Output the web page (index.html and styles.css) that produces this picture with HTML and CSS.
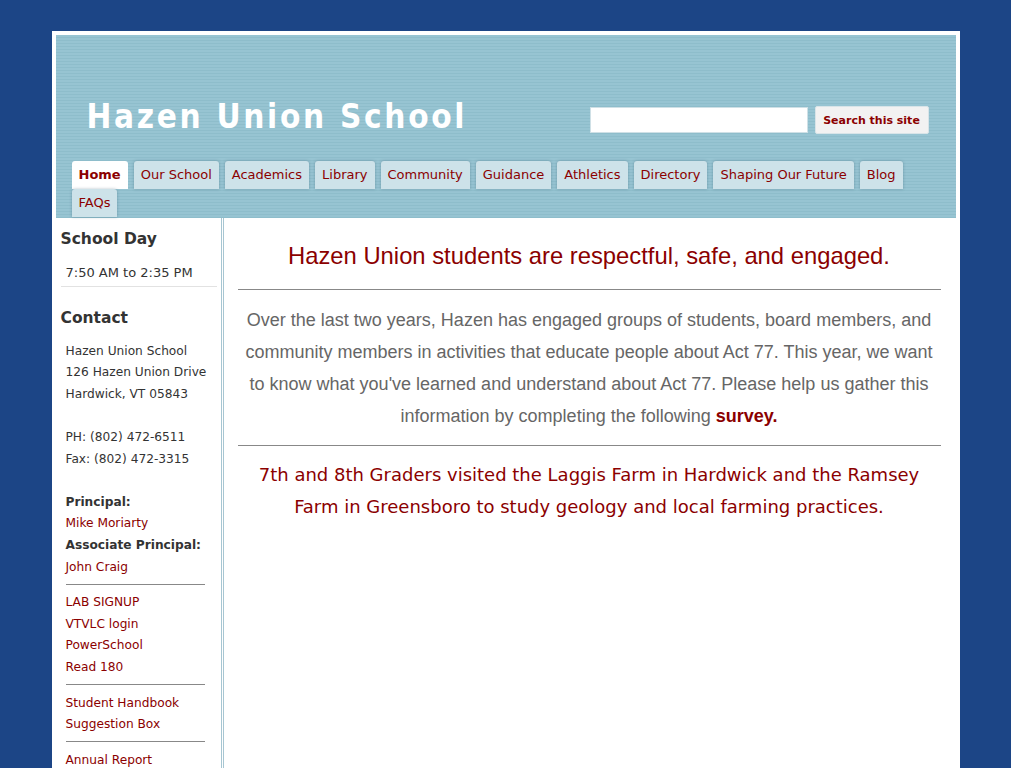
FILE: index.html
```html
<!DOCTYPE html>
<html lang="en">
<head>
<meta charset="utf-8">
<title>Hazen Union School</title>
<link rel="stylesheet" href="styles.css">
</head>
<body>
<div class="page">
  <div class="wrap">
    <header class="header">
      <div class="top">
        <h1 class="site-title">Hazen Union School</h1>
        <form class="search">
          <input class="search-input" type="text" aria-label="Search">
          <button class="search-btn" type="button">Search this site</button>
        </form>
      </div>
      <nav class="nav">
        <a class="tab active" href="#">Home</a>
        <a class="tab" href="#">Our School</a>
        <a class="tab" href="#">Academics</a>
        <a class="tab" href="#">Library</a>
        <a class="tab" href="#">Community</a>
        <a class="tab" href="#">Guidance</a>
        <a class="tab" href="#">Athletics</a>
        <a class="tab" href="#">Directory</a>
        <a class="tab" href="#">Shaping Our Future</a>
        <a class="tab" href="#">Blog</a>
        <a class="tab" href="#">FAQs</a>
      </nav>
    </header>
    <div class="main">
      <aside class="side">
        <h2 class="side-h">School Day</h2>
        <div class="side-box hours">7:50 AM to 2:35 PM</div>
        <h2 class="side-h contact-h">Contact</h2>
        <div class="side-box">
          <div>Hazen Union School</div>
          <div>126 Hazen Union Drive</div>
          <div>Hardwick, VT 05843</div>
          <div class="blank"></div>
          <div>PH: (802) 472-6511</div>
          <div>Fax: (802) 472-3315</div>
          <div class="blank"></div>
          <div class="b">Principal:</div>
          <div><a href="#">Mike Moriarty</a></div>
          <div class="b">Associate Principal:</div>
          <div><a href="#">John Craig</a></div>
          <hr class="side-hr">
          <div><a href="#">LAB SIGNUP</a></div>
          <div><a href="#">VTVLC login</a></div>
          <div><a href="#">PowerSchool</a></div>
          <div><a href="#">Read 180</a></div>
          <hr class="side-hr">
          <div><a href="#">Student Handbook</a></div>
          <div><a href="#">Suggestion Box</a></div>
          <hr class="side-hr">
          <div><a href="#">Annual Report</a></div>
        </div>
      </aside>
      <section class="content">
        <h2 class="headline">Hazen Union students are respectful, safe, and engaged.</h2>
        <hr class="c-hr">
        <p class="intro">Over the last two years, Hazen has engaged groups of students, board members, and community members in activities that educate people about Act 77. This year, we want to know what you've learned and understand about Act 77. Please help us gather this information by completing the following <a class="survey" href="#">survey.</a></p>
        <hr class="c-hr">
        <p class="news">7th and 8th Graders visited the Laggis Farm in Hardwick and the Ramsey Farm in Greensboro to study geology and local farming practices.</p>
      </section>
    </div>
  </div>
</div>
</body>
</html>
```

FILE: styles.css
```css
html { background: #fff; }
body { margin: 0; font-family: "DejaVu Sans", sans-serif; }
.page {
  margin-right: 13px;
  min-height: 768px;
  background: #1c4586;
  padding-top: 31px;
}
.wrap {
  width: 900px;
  margin: 0 auto;
  border: 4px solid #fff;
  border-bottom: 0;
  background: #fff;
}
.header {
  height: 183px;
  background: repeating-linear-gradient(to bottom, #97c4d2 0, #97c4d2 2px, #8ebdcb 2px, #8ebdcb 3px);
  display: flex;
  flex-direction: column;
  justify-content: space-between;
}
.top {
  display: flex;
  align-items: flex-start;
  justify-content: space-between;
  padding: 62px 27px 0 31px;
}
.site-title {
  margin: 0;
  color: #fff;
  font-family: "DejaVu Sans Condensed", "DejaVu Sans", sans-serif;
  font-weight: bold;
  font-size: 33px;
  letter-spacing: 2.7px;
  line-height: 40px;
}
.search { display: flex; align-items: center; gap: 7px; margin-top: 9px; }
.search-input {
  width: 218px;
  height: 26px;
  box-sizing: border-box;
  border: 1px solid #cfe0e6;
  background: #fff;
  margin: 0;
}
.search-btn {
  width: 114px;
  height: 28px;
  border: 1px solid #d8e4e8;
  background: #f2f2f2;
  color: #8b0000;
  font-family: "DejaVu Sans", sans-serif;
  font-weight: bold;
  font-size: 11px;
  padding: 0;
  margin: 0;
  border-radius: 2px;
}
.nav {
  display: flex;
  flex-wrap: wrap;
  padding: 0 40px 1px 16px;
}
.tab {
  display: block;
  height: 28px;
  line-height: 28px;
  padding: 0 7px;
  margin-right: 6px;
  background: #cde2e9;
  color: #8b0000;
  text-decoration: none;
  font-size: 13px;
  border-radius: 3px 3px 0 0;
  box-shadow: 0 0 3px rgba(40, 70, 90, 0.35);
}
.tab.active { background: #fff; font-weight: bold; box-shadow: none; }
.main { display: flex; align-items: stretch; min-height: 560px; }
.side {
  width: 156px;
  padding: 10px 4px 0 5px;
  color: #333;
  font-size: 12.2px;
}
.side-h {
  margin: 0;
  font-size: 15.5px;
  line-height: 22px;
  color: #333;
  font-weight: bold;
}
.side-box { padding-left: 5px; line-height: 21.6px; }
.hours {
  margin-top: 12px;
  padding-bottom: 2px;
  font-size: 13px;
  border-bottom: 1px solid #e2e2e2;
}
.contact-h { margin-top: 20px; }
.contact-h + .side-box { margin-top: 12px; }
.blank { height: 21.6px; }
.b { font-weight: bold; }
.side a { color: #8b0000; text-decoration: none; }
.side-hr {
  margin: 5.5px 12px 7.5px 0;
  border: 0;
  border-top: 1px solid #888;
  height: 0;
}
.content {
  flex: 1;
  border-left: 3px double #a7c6d2;
  padding: 23px 15px 0 14px;
  text-align: center;
}
.headline {
  margin: 0;
  font-family: "Liberation Sans", Arial, sans-serif;
  font-weight: normal;
  font-size: 23.8px;
  line-height: 30px;
  color: #8b0000;
}
.c-hr {
  margin: 18px 0 0;
  border: 0;
  border-top: 1px solid #888;
  height: 0;
}
.intro {
  margin: 14px 0 13px;
  font-family: "Liberation Sans", Arial, sans-serif;
  font-size: 18px;
  line-height: 32px;
  color: #666;
}
.survey { color: #8b0000; font-weight: bold; text-decoration: none; }
.intro + .c-hr { margin-top: 0; }
.news {
  margin: 13px 0 0;
  font-family: "DejaVu Sans", sans-serif;
  font-size: 18px;
  line-height: 32px;
  color: #8b0000;
}
```
